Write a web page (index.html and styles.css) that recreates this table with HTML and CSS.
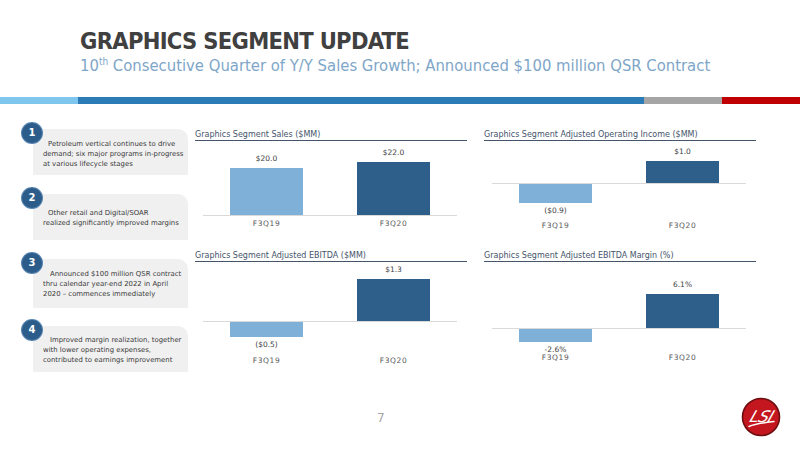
FILE: index.html
```html
<!DOCTYPE html>
<html>
<head>
<meta charset="utf-8">
<link rel="stylesheet" href="styles.css">
</head>
<body>
<div class="slide">
  <header class="head">
    <h1>GRAPHICS SEGMENT UPDATE</h1>
    <p class="sub">10<sup>th</sup> Consecutive Quarter of Y/Y Sales Growth; Announced $100 million QSR Contract</p>
  </header>
  <div class="stripe"><span class="s1"></span><span class="s2"></span><span class="s3"></span><span class="s4"></span></div>
  <main class="content">
    <aside class="points">
      <div class="point p1"><span class="badge">1</span>Petroleum vertical continues to drive<br>demand; six major programs in-progress<br>at various lifecycle stages</div>
      <div class="point p2"><span class="badge">2</span>Other retail and Digital/SOAR<br>realized significantly improved margins</div>
      <div class="point p3"><span class="badge">3</span>Announced $100 million QSR contract<br>thru calendar year-end 2022 in April<br>2020 – commences immediately</div>
      <div class="point p4"><span class="badge">4</span>Improved margin realization, together<br>with lower operating expenses,<br>contributed to earnings improvement</div>
    </aside>
    <section class="charts">
      <div class="chart c1">
        <div class="ctitle">Graphics Segment Sales ($MM)</div>
        <div class="plot">
          <div class="row pos">
            <div class="col"><span class="lbl">$20.0</span><span class="bar light" style="height:47px"></span></div>
            <div class="col"><span class="lbl">$22.0</span><span class="bar dark" style="height:53px"></span></div>
          </div>
          <div class="axis"></div>
          <div class="row neg"></div>
          <div class="cats"><span>F3Q19</span><span>F3Q20</span></div>
        </div>
      </div>
      <div class="chart c2">
        <div class="ctitle">Graphics Segment Adjusted Operating Income ($MM)</div>
        <div class="plot">
          <div class="row pos">
            <div class="col"></div>
            <div class="col"><span class="lbl">$1.0</span><span class="bar dark" style="height:22px"></span></div>
          </div>
          <div class="axis"></div>
          <div class="row neg">
            <div class="col"><span class="bar light" style="height:19px"></span><span class="lbl">($0.9)</span></div>
            <div class="col"></div>
          </div>
          <div class="cats"><span>F3Q19</span><span>F3Q20</span></div>
        </div>
      </div>
      <div class="chart c3">
        <div class="ctitle">Graphics Segment Adjusted EBITDA ($MM)</div>
        <div class="plot">
          <div class="row pos">
            <div class="col"></div>
            <div class="col"><span class="lbl">$1.3</span><span class="bar dark" style="height:42px"></span></div>
          </div>
          <div class="axis"></div>
          <div class="row neg">
            <div class="col"><span class="bar light" style="height:15px"></span><span class="lbl">($0.5)</span></div>
            <div class="col"></div>
          </div>
          <div class="cats"><span>F3Q19</span><span>F3Q20</span></div>
        </div>
      </div>
      <div class="chart c4">
        <div class="ctitle">Graphics Segment Adjusted EBITDA Margin (%)</div>
        <div class="plot">
          <div class="row pos">
            <div class="col"></div>
            <div class="col"><span class="lbl">6.1%</span><span class="bar dark" style="height:34px"></span></div>
          </div>
          <div class="axis"></div>
          <div class="row neg">
            <div class="col"><span class="bar light" style="height:13px"></span><span class="lbl">-2.6%</span></div>
            <div class="col"></div>
          </div>
          <div class="cats"><span>F3Q19</span><span>F3Q20</span></div>
        </div>
      </div>
    </section>
  </main>
  <footer class="foot">
    <span class="pnum">7</span>
    <svg class="logo" width="40" height="40" viewBox="0 0 40 40">
      <circle cx="20" cy="20" r="18.5" fill="#c3161e" stroke="#6e0d10" stroke-width="1.6"/>
      <text x="20" y="25" text-anchor="middle" class="logotext" transform="skewX(-20) translate(8 0)">LSI</text>
      <path d="M8 29.5 C15 26.5 24 25.5 33 24.5" fill="none" stroke="#fff" stroke-width="1.5" stroke-linecap="round"/>
    </svg>
  </footer>
</div>
</body>
</html>
```

FILE: styles.css
```css
html, body {
  margin: 0;
  padding: 0;
  background: #ffffff;
}

.slide {
  width: 800px;
  height: 450px;
  overflow: hidden;
  font-family: "DejaVu Sans", sans-serif;
  background: #ffffff;
}

.head {
  height: 97px;
  box-sizing: border-box;
  padding: 27px 0 0 80px;
}

.head h1 {
  margin: 0;
  font-family: "DejaVu Sans Condensed", "DejaVu Sans", sans-serif;
  font-stretch: condensed;
  font-weight: bold;
  font-size: 23.5px;
  line-height: 29px;
  color: #404040;
  letter-spacing: -0.7px;
}

.sub {
  margin: 0;
  font-family: "DejaVu Sans Condensed", "DejaVu Sans", sans-serif;
  font-stretch: condensed;
  font-size: 16.5px;
  line-height: 20px;
  color: #7ea6c8;
}

.sub sup {
  font-size: 10px;
  line-height: 0;
}

.stripe {
  display: flex;
  height: 7px;
}

.stripe .s1 { width: 78px; background: #7fc6ef; }
.stripe .s2 { width: 566px; background: #2a7bb6; }
.stripe .s3 { width: 78px; background: #a5a5a5; }
.stripe .s4 { width: 78px; background: #c00000; }

.content {
  display: flex;
  height: 291px;
}

.points {
  width: 155px;
  margin-left: 33px;
  padding-top: 25px;
  display: flex;
  flex-direction: column;
}

.point {
  position: relative;
  background: #f0f0f0;
  border-top-right-radius: 10px;
  height: 46px;
  box-sizing: border-box;
  padding: 10px 2px 0 10px;
  font-size: 6.9px;
  line-height: 10px;
  color: #3a3a3a;
  text-indent: 5px;
  white-space: nowrap;
}

.point.p1 { padding-top: 10px; }
.point.p2 { margin-top: 19px; padding-top: 14px; }
.point.p3 { margin-top: 19px; height: 49px; padding-top: 10px; text-indent: 7px; }
.point.p4 { margin-top: 18px; padding-top: 9px; text-indent: 7px; }

.badge {
  position: absolute;
  left: -11px;
  top: -6px;
  width: 20px;
  height: 20px;
  border-radius: 50%;
  background: #2c5c89;
  box-shadow: 0 0 0 1px #5683b0;
  color: #ffffff;
  font-weight: bold;
  font-size: 10px;
  line-height: 20px;
  text-align: center;
  text-indent: 0;
}

.charts {
  margin-left: 7px;
  padding-top: 25px;
  display: grid;
  grid-template-columns: 272px 272px;
  grid-template-rows: 121px 1fr;
  column-gap: 17px;
}

.ctitle {
  height: 11px;
  font-size: 8px;
  line-height: 11px;
  color: #44546a;
  border-bottom: 1px solid #44546a;
  white-space: nowrap;
}

.plot {
  margin-left: 8px;
  width: 254px;
}

.row {
  display: flex;
}

.pos { align-items: flex-end; }
.neg { align-items: flex-start; }

.col {
  flex: 1;
  display: flex;
  flex-direction: column;
  align-items: center;
}

.bar {
  display: block;
  width: 73px;
}

.bar.light { background: #7fb0d8; }
.bar.dark { background: #2e5f8a; }

.lbl {
  font-size: 7.5px;
  line-height: 10px;
  color: #404040;
}

.pos .lbl { margin-bottom: 4px; }
.neg .lbl { margin-top: 3px; }

.axis {
  height: 1px;
  background: #d9d9d9;
}

.cats {
  display: flex;
  padding-top: 3px;
}

.cats span {
  flex: 1;
  text-align: center;
  font-size: 7.5px;
  line-height: 10px;
  color: #595959;
  letter-spacing: 0.6px;
}

.c1 .pos { height: 74px; }
.c1 .neg { height: 0; }
.c2 .pos { height: 42px; }
.c2 .neg { height: 34px; }
.c3 .pos { height: 59px; }
.c3 .neg { height: 31px; }
.c4 .pos { height: 66px; }
.c4 .neg { height: 21px; }

.foot {
  display: flex;
  align-items: flex-start;
  height: 55px;
  padding-top: 2px;
  box-sizing: border-box;
}

.pnum {
  margin-left: 377px;
  margin-top: 14px;
  font-family: "DejaVu Sans", sans-serif;
  font-size: 12px;
  line-height: 14px;
  color: #a6a6a6;
}

.logo {
  margin-left: auto;
  margin-right: 19px;
}

.logotext {
  font-family: "DejaVu Sans", sans-serif;
  font-style: italic;
  font-size: 16px;
  fill: #ffffff;
  letter-spacing: -0.5px;
}
```
